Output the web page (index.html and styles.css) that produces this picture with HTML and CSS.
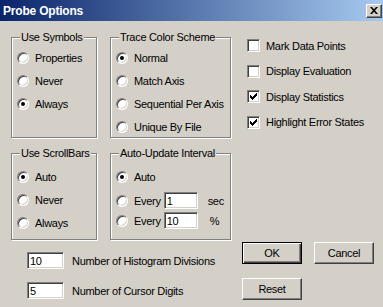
FILE: index.html
```html
<!DOCTYPE html>
<html lang="en">
  <head>
    <meta charset="UTF-8" />
    <title>Probe Options</title>
    <link rel="stylesheet" href="styles.css">
  </head>
  <body>
    <div class="window">
      <div class="titlebar">
        <span class="title">Probe Options</span>
        <button class="close" title="Close">
          <svg width="8" height="7" viewBox="0 0 8 7">
            <path d="M0 0h2l2 2.3l2-2.3h2l-3 3.5l3 3.5h-2l-2-2.3l-2 2.3h-2l3-3.5z" fill="#000" />
          </svg>
        </button>
      </div>

      <div class="dialog">
        <div class="left">
          <div class="groups">
            <fieldset class="group upper">
              <legend>Use Symbols</legend>
              <label class="opt"><span class="radio"></span>Properties</label>
              <label class="opt"><span class="radio"></span>Never</label>
              <label class="opt"><span class="radio on"></span>Always</label>
            </fieldset>

            <fieldset class="group upper">
              <legend>Trace Color Scheme</legend>
              <label class="opt"><span class="radio on"></span>Normal</label>
              <label class="opt"><span class="radio"></span>Match Axis</label>
              <label class="opt"><span class="radio"></span>Sequential Per Axis</label>
              <label class="opt"><span class="radio"></span>Unique By File</label>
            </fieldset>

            <fieldset class="group lower">
              <legend>Use ScrollBars</legend>
              <label class="opt"><span class="radio on"></span>Auto</label>
              <label class="opt"><span class="radio"></span>Never</label>
              <label class="opt"><span class="radio"></span>Always</label>
            </fieldset>

            <fieldset class="group lower interval">
              <legend>Auto-Update Interval</legend>
              <label class="opt first"><span class="radio on"></span>Auto</label>
              <div class="every">
                <span class="radio"></span>
                <span>Every</span>
                <input class="field small" value="1" />
                <span class="unit">sec</span>
              </div>
              <div class="every">
                <span class="radio"></span>
                <span>Every</span>
                <input class="field small" value="10" />
                <span class="unit pct">%</span>
              </div>
            </fieldset>
          </div>

          <div class="numbers">
            <div class="num-row">
              <input class="field num" value="10" />
              <span>Number of Histogram Divisions</span>
            </div>
            <div class="num-row">
              <input class="field num" value="5" />
              <span>Number of Cursor Digits</span>
            </div>
          </div>
        </div>

        <div class="right">
          <div class="checks">
            <label class="check"><span class="cb"></span>Mark Data Points</label>
            <label class="check"><span class="cb"></span>Display Evaluation</label>
            <label class="check">
              <span class="cb">
                <svg width="7" height="7" viewBox="0 0 7 7"><path d="M0 2h1v1h1v1h1v-1h1v-1h1v-1h1v-1h1v3h-1v1h-1v1h-1v1h-1v1h-1v-1h-1v-1h-1z" fill="#000" /></svg>
              </span>Display Statistics
            </label>
            <label class="check">
              <span class="cb">
                <svg width="7" height="7" viewBox="0 0 7 7"><path d="M0 2h1v1h1v1h1v-1h1v-1h1v-1h1v-1h1v3h-1v1h-1v1h-1v1h-1v1h-1v-1h-1v-1h-1z" fill="#000" /></svg>
              </span>Highlight Error States
            </label>
          </div>

          <div class="buttons">
            <div class="btn-row">
              <button class="btn default">OK</button>
              <button class="btn">Cancel</button>
            </div>
            <div class="btn-row">
              <button class="btn">Reset</button>
            </div>
          </div>
        </div>
      </div>
    </div>
  </body>
</html>
```

FILE: styles.css
```css
* {
  box-sizing: border-box;
}

body {
  margin: 0;
  width: 383px;
  height: 307px;
  overflow: hidden;
  background: #d4d0c8;
  font-family: "Liberation Sans", Arial, sans-serif;
  font-size: 11px;
  letter-spacing: -0.3px;
  color: #000;
}

/* title bar */

.titlebar {
  height: 21px;
  display: flex;
  align-items: center;
  justify-content: space-between;
  padding: 0 1px 0 3px;
  background: linear-gradient(to right, #0a246a, #a6caf0);
}

.title {
  color: #fff;
  font-weight: bold;
  font-size: 12px;
  letter-spacing: -0.2px;
}

.close {
  width: 16px;
  height: 14px;
  padding: 0 0 1px 0;
  display: flex;
  align-items: center;
  justify-content: center;
  background: #d4d0c8;
  border: 1px solid;
  border-color: #fff #404040 #404040 #fff;
  box-shadow: inset -1px -1px #808080;
}

/* dialog layout */

.dialog {
  display: grid;
  grid-template-columns: 220px 132px;
  column-gap: 11px;
  padding: 10px 0 0 11px;
}

.left {
  display: flex;
  flex-direction: column;
}

.groups {
  display: grid;
  grid-template-columns: 86px 121px;
  gap: 9px 13px;
}

.group {
  margin: 0;
  min-width: 0;
  display: flex;
  flex-direction: column;
  gap: 10px;
  border: 1px solid #808080;
  box-shadow: inset 1px 1px #fff, 1px 1px #fff;
}

.group.upper {
  padding: 7px 4px 4px 5px;
}

.group.lower {
  padding: 10px 4px 10px 5px;
}

.group legend {
  margin-left: 3px;
  padding: 0 1px;
  line-height: 13px;
  background: #d4d0c8;
}

.opt {
  display: flex;
  align-items: center;
  gap: 6px;
  height: 13px;
  white-space: nowrap;
}

.interval {
  gap: 3px;
}

.interval .first {
  margin-bottom: 6px;
}

.every {
  display: flex;
  align-items: center;
  height: 17px;
  white-space: nowrap;
}

.every .radio {
  margin-right: 6px;
}

.every .field {
  margin-left: 3px;
}

.unit {
  margin-left: 10px;
}

.unit.pct {
  margin-left: 12px;
}

/* sunken controls */

.radio {
  flex: none;
  width: 12px;
  height: 12px;
  border-radius: 50%;
  border: 1px solid;
  border-color: #808080 #fff #fff #808080;
  background: #fff;
  box-shadow: inset 1px 1px #404040, inset -1px -1px #d4d0c8;
}

.radio.on::after {
  content: "";
  display: block;
  width: 4px;
  height: 4px;
  margin: 3px;
  border-radius: 50%;
  background: #000;
}

.cb {
  flex: none;
  width: 13px;
  height: 13px;
  display: flex;
  align-items: center;
  justify-content: center;
  border: 1px solid;
  border-color: #808080 #fff #fff #808080;
  background: #fff;
  box-shadow: inset 1px 1px #404040, inset -1px -1px #d4d0c8;
}

.field {
  height: 17px;
  padding: 0 2px;
  border: 1px solid;
  border-color: #808080 #fff #fff #808080;
  background: #fff;
  box-shadow: inset 1px 1px #404040, inset -1px -1px #d4d0c8;
  font-family: "Liberation Sans", Arial, sans-serif;
  font-size: 11px;
  letter-spacing: -0.3px;
  color: #000;
  outline: none;
}

.field.small {
  width: 34px;
}

.field.num {
  width: 37px;
}

/* number rows */

.numbers {
  display: flex;
  flex-direction: column;
  gap: 13px;
  margin-top: 12px;
}

.num-row {
  display: flex;
  align-items: center;
  gap: 8px;
  height: 17px;
  padding-left: 16px;
}

/* right column */

.right {
  display: flex;
  flex-direction: column;
  justify-content: space-between;
}

.checks {
  display: flex;
  flex-direction: column;
  gap: 12.5px;
  margin-top: 8px;
  padding-left: 5px;
}

.check {
  display: flex;
  align-items: center;
  gap: 6px;
  height: 13px;
  white-space: nowrap;
}

.buttons {
  display: flex;
  flex-direction: column;
  gap: 14px;
  margin-bottom: -1px;
}

.btn-row {
  display: flex;
  gap: 12px;
}

.btn {
  width: 60px;
  height: 22px;
  padding: 0;
  background: #d4d0c8;
  border: 1px solid;
  border-color: #fff #404040 #404040 #fff;
  box-shadow: inset -1px -1px #808080;
  font-family: "Liberation Sans", Arial, sans-serif;
  font-size: 11px;
  letter-spacing: -0.3px;
  color: #000;
}

.btn.default {
  border-color: #000;
  box-shadow: inset 1px 1px #fff, inset -1px -1px #404040, inset -2px -2px #808080;
}
```
